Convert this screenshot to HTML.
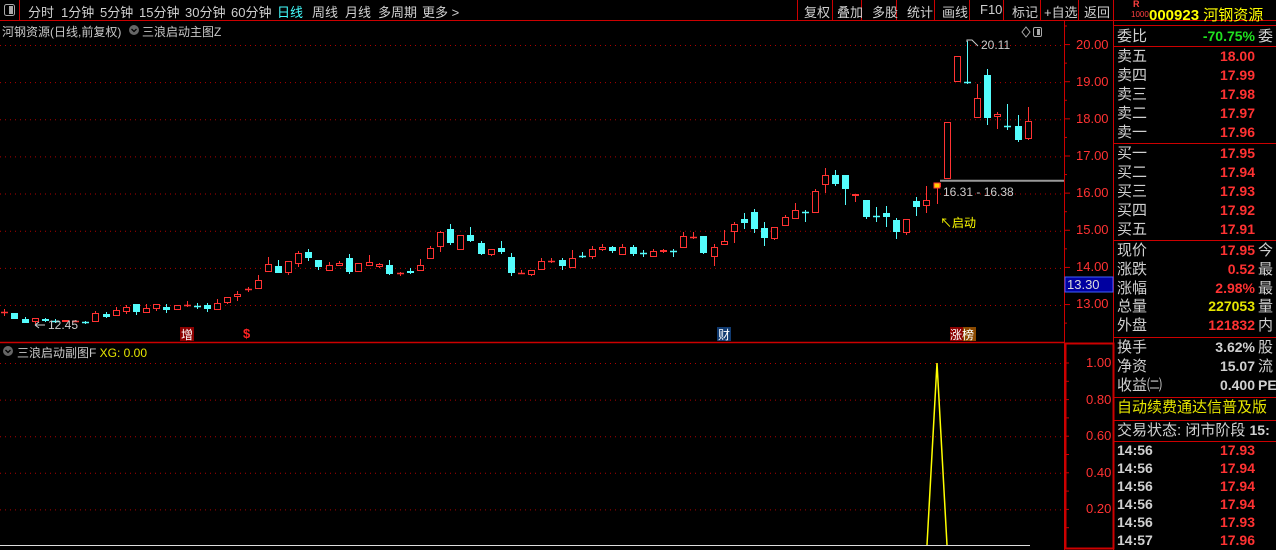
<!DOCTYPE html>
<html><head><meta charset="utf-8"><style>
*{margin:0;padding:0;box-sizing:border-box}
body{width:1276px;height:550px;background:#000;overflow:hidden;position:relative;font-family:"Liberation Sans","Noto Sans CJK SC",sans-serif;color:#c8c8c8}
.a{position:absolute;white-space:nowrap}
.tb{font-size:13px;top:2px;color:#d0d0d0}
.rp{position:absolute;left:1113px;width:163px;font-size:15px}
.row{position:absolute;left:4px;width:160px;height:19px;line-height:19px}
.row .l{position:absolute;left:0;color:#d0d0d0}
.row .v{position:absolute;right:22px;font-weight:bold;font-size:14px}
.row .e{position:absolute;left:141px;color:#d0d0d0}
.r{color:#ff3232}.g{color:#20e020}.y{color:#e6e600}.w{color:#d0d0d0}
.hl{position:absolute;left:1113px;width:163px;height:1px;background:#c00}
.ax{position:absolute;left:1076px;font-size:13px;color:#ff3232}
</style></head><body>
<svg width="1276" height="550" style="position:absolute;left:0;top:0" id="s">
<g id="grid" stroke="#b00000" stroke-dasharray="1,4" stroke-width="1"></g>
<line x1="0" y1="20.5" x2="1276" y2="20.5" stroke="#c00"/>
<line x1="19.5" y1="0" x2="19.5" y2="20" stroke="#c00"/>
<line x1="0" y1="342.5" x2="1064" y2="342.5" stroke="#c00" stroke-width="1.5"/>
<line x1="1064.5" y1="20" x2="1064.5" y2="550" stroke="#c00"/>
<line x1="1113.5" y1="0" x2="1113.5" y2="550" stroke="#c00"/>
<rect x="1065.5" y="343.5" width="48" height="205" fill="none" stroke="#c00" stroke-width="2"/>
<g stroke="#c00"><line x1="797.5" y1="0" x2="797.5" y2="20"/><line x1="832.5" y1="0" x2="832.5" y2="20"/><line x1="861.5" y1="0" x2="861.5" y2="20"/><line x1="896.5" y1="0" x2="896.5" y2="20"/><line x1="934.5" y1="0" x2="934.5" y2="20"/><line x1="969.5" y1="0" x2="969.5" y2="20"/><line x1="1003.5" y1="0" x2="1003.5" y2="20"/><line x1="1040.5" y1="0" x2="1040.5" y2="20"/><line x1="1078.5" y1="0" x2="1078.5" y2="20"/></g>
<rect x="4.5" y="4.5" width="10" height="11" rx="2" fill="none" stroke="#aaa"/><rect x="9" y="6" width="4" height="8" fill="#aaa"/>
<rect x="1033.5" y="27.5" width="8" height="9" rx="1.5" fill="none" stroke="#aaa"/><rect x="1037" y="29" width="3" height="6" fill="#aaa"/>
<path d="M1026 27 L1030 32 L1026 37 L1022 32Z" fill="none" stroke="#aaa"/>
<circle cx="134" cy="30" r="5" fill="#666"/><path d="M131.5 29 L134 31.5 L136.5 29" stroke="#000" fill="none" stroke-width="1.3"/>
<circle cx="8" cy="351" r="5" fill="#666"/><path d="M5.5 350 L8 352.5 L10.5 350" stroke="#000" fill="none" stroke-width="1.3"/>
<g id="ticks" stroke="#c00"></g>
<g id="c"></g>
<line x1="940" y1="180.7" x2="1064" y2="180.7" stroke="#999" stroke-width="2"/>
<rect x="934" y="183" width="6" height="5" fill="#ffd000" stroke="#f33"/>
<path d="M967 42 L967 40 L972 40 L978 46" stroke="#ccc" fill="none"/>
<path d="M35 325 L45 325 M35 325 L39 322 M35 325 L39 328" stroke="#ccc" fill="none"/>
<line x1="0" y1="545.5" x2="1030" y2="545.5" stroke="#ddd"/>
<polyline points="927,545 937,363 947,545" fill="none" stroke="#ffff00" stroke-width="1.5"/>
<rect x="180" y="327" width="14" height="14" fill="#8b0000"/>
<rect x="717" y="327" width="14" height="14" fill="#103a70"/>
<rect x="950" y="327" width="13" height="14" fill="#8b0000"/>
<rect x="963" y="327" width="13" height="14" fill="#8b4a00"/>
<rect x="1065" y="277" width="48" height="15" fill="#0000a0" stroke="#4060ff"/>
</svg>
<div class="a tb" style="left:28px">分时</div>
<div class="a tb" style="left:61px">1分钟</div>
<div class="a tb" style="left:100px">5分钟</div>
<div class="a tb" style="left:139px">15分钟</div>
<div class="a tb" style="left:185px">30分钟</div>
<div class="a tb" style="left:231px">60分钟</div>
<div class="a tb" style="left:277px;color:#4ff">日线</div>
<div class="a tb" style="left:312px">周线</div>
<div class="a tb" style="left:345px">月线</div>
<div class="a tb" style="left:378px">多周期</div>
<div class="a tb" style="left:422px">更多 &gt;</div>
<div class="a tb" style="left:804px">复权</div>
<div class="a tb" style="left:837px">叠加</div>
<div class="a tb" style="left:872px">多股</div>
<div class="a tb" style="left:907px">统计</div>
<div class="a tb" style="left:942px">画线</div>
<div class="a tb" style="left:980px">F10</div>
<div class="a tb" style="left:1012px">标记</div>
<div class="a tb" style="left:1044px">+自选</div>
<div class="a tb" style="left:1084px">返回</div>
<div class="a" style="left:1133px;top:-1px;font-size:9px;color:#ff4040;font-weight:bold">R</div>
<div class="a" style="left:1131px;top:10px;font-size:8px;color:#ff4040">1000</div>
<div class="a" style="left:1149px;top:4px;font-size:15px;color:#ffff00;font-weight:bold">000923 <span style="font-weight:normal">河钢资源</span></div>
<div class="a" style="left:2px;top:23px;font-size:12px">河钢资源(日线,前复权)</div>
<div class="a" style="left:142px;top:23px;font-size:12px">三浪启动主图Z</div>
<div class="a" style="left:17px;top:344px;font-size:12px">三浪启动副图F <span class="y">XG: 0.00</span></div>
<div class="a" style="left:981px;top:38px;font-size:12px;color:#ccc">20.11</div>
<div class="a" style="left:48px;top:318px;font-size:12px;color:#ccc">12.45</div>
<div class="a" style="left:943px;top:185px;font-size:12px;color:#ccc">16.31 - 16.38</div>
<div class="a" style="left:940px;top:214px;font-size:12px;color:#ffff00">↖启动</div>
<div class="a" style="left:181px;top:326px;font-size:12px;color:#fff">增</div>
<div class="a" style="left:243px;top:326px;font-size:13px;color:#f22;font-weight:bold">$</div>
<div class="a" style="left:718px;top:326px;font-size:12px;color:#fff">财</div>
<div class="a" style="left:950px;top:326px;font-size:12px;color:#fff">涨榜</div>
<div class="ax" style="top:37px">20.00</div>
<div class="ax" style="top:74px">19.00</div>
<div class="ax" style="top:111px">18.00</div>
<div class="ax" style="top:148px">17.00</div>
<div class="ax" style="top:185px">16.00</div>
<div class="ax" style="top:222px">15.00</div>
<div class="ax" style="top:259px">14.00</div>
<div class="ax" style="top:277px;left:1067px;color:#ddd">13.30</div>
<div class="ax" style="top:296px">13.00</div>
<div class="ax" style="top:355px;left:1086px">1.00</div>
<div class="ax" style="top:392px;left:1086px">0.80</div>
<div class="ax" style="top:428px;left:1086px">0.60</div>
<div class="ax" style="top:465px;left:1086px">0.40</div>
<div class="ax" style="top:501px;left:1086px">0.20</div>
<div class="hl" style="top:25px"></div>
<div class="hl" style="top:46px"></div>
<div class="hl" style="top:143px"></div>
<div class="hl" style="top:240px"></div>
<div class="hl" style="top:337px"></div>
<div class="hl" style="top:397px"></div>
<div class="hl" style="top:420px"></div>
<div class="hl" style="top:441px"></div>
<div class="rp" style="top:0">
<div class="row" style="top:27px"><span class="l">委比</span><span class="v g">-70.75%</span><span class="e">委</span></div>
<div class="row" style="top:47px"><span class="l">卖五</span><span class="v r">18.00</span></div>
<div class="row" style="top:66px"><span class="l">卖四</span><span class="v r">17.99</span></div>
<div class="row" style="top:85px"><span class="l">卖三</span><span class="v r">17.98</span></div>
<div class="row" style="top:104px"><span class="l">卖二</span><span class="v r">17.97</span></div>
<div class="row" style="top:123px"><span class="l">卖一</span><span class="v r">17.96</span></div>
<div class="row" style="top:144px"><span class="l">买一</span><span class="v r">17.95</span></div>
<div class="row" style="top:163px"><span class="l">买二</span><span class="v r">17.94</span></div>
<div class="row" style="top:182px"><span class="l">买三</span><span class="v r">17.93</span></div>
<div class="row" style="top:201px"><span class="l">买四</span><span class="v r">17.92</span></div>
<div class="row" style="top:220px"><span class="l">买五</span><span class="v r">17.91</span></div>
<div class="row" style="top:241px"><span class="l">现价</span><span class="v r">17.95</span><span class="e">今</span></div>
<div class="row" style="top:260px"><span class="l">涨跌</span><span class="v r">0.52</span><span class="e">最</span></div>
<div class="row" style="top:279px"><span class="l">涨幅</span><span class="v r">2.98%</span><span class="e">最</span></div>
<div class="row" style="top:297px"><span class="l">总量</span><span class="v y">227053</span><span class="e">量</span></div>
<div class="row" style="top:316px"><span class="l">外盘</span><span class="v r">121832</span><span class="e">内</span></div>
<div class="row" style="top:338px"><span class="l">换手</span><span class="v w">3.62%</span><span class="e">股</span></div>
<div class="row" style="top:357px"><span class="l">净资</span><span class="v w">15.07</span><span class="e">流</span></div>
<div class="row" style="top:376px"><span class="l">收益㈡</span><span class="v w">0.400</span><span class="e" style="font-weight:bold;font-size:14px">PE</span></div>
<div class="row" style="top:398px;color:#e6e600">自动续费通达信普及版</div>
<div class="row" style="top:421px"><span class="l">交易状态: 闭市阶段 <b style="font-size:14px">15:</b></span></div>
<div class="row" style="top:441px"><span class="l" style="font-weight:bold;font-size:14px">14:56</span><span class="v r">17.93</span></div>
<div class="row" style="top:459px"><span class="l" style="font-weight:bold;font-size:14px">14:56</span><span class="v r">17.94</span></div>
<div class="row" style="top:477px"><span class="l" style="font-weight:bold;font-size:14px">14:56</span><span class="v r">17.94</span></div>
<div class="row" style="top:495px"><span class="l" style="font-weight:bold;font-size:14px">14:56</span><span class="v r">17.94</span></div>
<div class="row" style="top:513px"><span class="l" style="font-weight:bold;font-size:14px">14:56</span><span class="v r">17.93</span></div>
<div class="row" style="top:531px"><span class="l" style="font-weight:bold;font-size:14px">14:57</span><span class="v r">17.96</span></div>
</div>
<script>
var NS="http://www.w3.org/2000/svg";
function el(p,t,a){var e=document.createElementNS(NS,t);for(var k in a)e.setAttribute(k,a[k]);p.appendChild(e);return e;}
var g=document.getElementById('grid');
for(var i=0;i<8;i++){var y=45.5+i*37.14;el(g,'line',{x1:0,y1:y,x2:1064,y2:y});}
for(var i=0;i<5;i++){var y=363.5+i*36.6;el(g,'line',{x1:0,y1:y,x2:1064,y2:y});}
var tk=document.getElementById('ticks');
for(var y=26;y<340;y+=18.57){el(tk,'line',{x1:1064,y1:y,x2:(Math.round((y-45)/37.14*2)%2==0?1070:1067),y2:y});}
for(var y=363;y<545;y+=18.3){el(tk,'line',{x1:1064,y1:y,x2:1069,y2:y});}
var D=[[4,312,313,309,316,'r'],[14,313,319,313,319,'c'],[25,319,323,317,323,'c'],[35,318,322,318,324,'r'],[45,319,321,318,322,'c'],[55,321,321,319,323,'c'],[65,320,322,320,322,'r'],[75,321,321,320,322,'r'],[85,322,322,321,324,'c'],[95,313,322,311,322,'r'],[106,314,317,312,318,'c'],[116,310,316,307,316,'r'],[126,307,312,305,314,'r'],[136,304,312,304,315,'c'],[146,308,313,304,313,'r'],[156,304,309,304,311,'r'],[166,307,310,304,313,'c'],[177,305,310,305,310,'r'],[187,305,305,301,307,'r'],[197,306,306,303,309,'c'],[207,305,309,303,312,'c'],[217,303,310,299,310,'r'],[227,297,303,297,304,'r'],[237,294,297,291,301,'r'],[248,289,289,287,292,'r'],[258,280,289,275,289,'r'],[268,264,272,257,272,'r'],[278,266,273,260,273,'c'],[288,261,273,261,275,'r'],[298,253,264,251,267,'r'],[308,252,258,249,261,'c'],[318,260,267,260,270,'c'],[329,265,271,262,271,'r'],[339,263,266,261,266,'r'],[349,258,272,254,274,'c'],[358,263,272,263,272,'r'],
[369,262,266,255,266,'r'],[379,264,267,263,268,'r'],[389,265,274,260,275,'c'],[400,273,274,272,276,'r'],[410,271,273,268,274,'c'],[420,265,271,259,271,'r'],[430,248,259,246,259,'r'],[440,232,247,231,252,'r'],[450,229,243,224,245,'c'],[460,235,250,235,250,'r'],[470,235,241,227,242,'c'],[481,243,254,241,255,'c'],[491,249,255,249,256,'r'],[501,248,252,241,254,'c'],[511,257,273,253,276,'c'],[521,273,273,270,274,'r'],[531,270,275,270,276,'r'],[541,261,270,258,270,'r'],[551,261,261,258,263,'r'],[562,260,266,258,270,'c'],[572,258,268,250,268,'r'],[582,256,256,252,258,'c'],[592,249,257,246,259,'r'],[602,247,250,244,251,'r'],[612,247,251,246,253,'c'],[622,247,255,244,255,'r'],[633,247,254,245,256,'c'],[643,253,253,250,257,'c'],[653,251,257,249,257,'r'],[663,250,252,249,253,'r'],[673,251,251,249,257,'c'],[683,236,248,232,248,'r'],[693,237,237,232,239,'r'],[703,236,253,236,254,'c'],[714,247,257,244,266,'r'],
[724,241,245,230,245,'r'],[734,224,232,222,243,'r'],[744,219,223,213,229,'c'],[754,212,229,209,233,'c'],[764,228,238,222,246,'c'],[774,227,239,227,240,'r'],[785,217,226,215,226,'r'],[795,210,219,203,219,'r'],[805,212,212,210,222,'c'],[815,191,213,189,213,'r'],[825,175,185,168,193,'r'],[835,175,184,170,186,'c'],[845,175,189,175,205,'c'],[855,194,196,194,202,'r'],[866,200,217,200,219,'c'],[876,216,216,207,222,'c'],[886,213,217,206,227,'c'],[896,220,232,218,239,'c'],[906,219,233,219,235,'r'],[916,201,207,197,216,'c'],[926,200,206,186,213,'r'],[937,183,187,183,204,'r'],[947,122,179,122,179,'r'],[957,56,82,56,82,'r'],[967,82,82,41,84,'c'],[977,98,118,84,118,'r'],[987,75,118,69,125,'c'],[997,114,117,112,129,'r'],[1007,126,126,104,130,'c'],[1018,126,140,115,142,'c'],[1028,121,139,107,140,'r']];
var c=document.getElementById('c');
D.forEach(function(d){var x=d[0],t=d[1],b=d[2],h=d[3],l=d[4],col=d[5]=='r'?'#ff3232':'#54fcfc';
el(c,'line',{x1:x+.5,y1:h,x2:x+.5,y2:t,stroke:col});el(c,'line',{x1:x+.5,y1:b,x2:x+.5,y2:l,stroke:col});
if(b-t<1.5){el(c,'line',{x1:x-3,y1:t+.5,x2:x+4,y2:t+.5,stroke:col,'stroke-width':1.5});}
else if(d[5]=='r'){el(c,'rect',{x:x-2.5,y:t+.5,width:6,height:b-t-1,fill:'#000',stroke:col});}
else{el(c,'rect',{x:x-3,y:t,width:7,height:b-t,fill:col});}
});
</script>
</body></html>
